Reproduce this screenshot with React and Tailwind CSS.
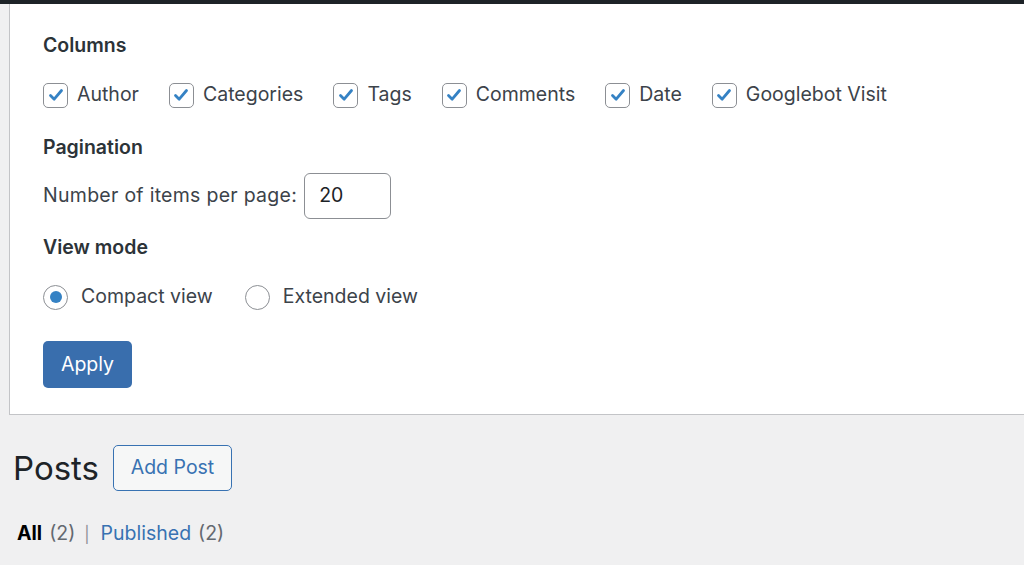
import React from "react";

const columns = ["Author", "Categories", "Tags", "Comments", "Date", "Googlebot Visit"];

const Checkbox = ({ label }) => (
  <label className="flex items-center gap-[9px]">
    <span className="w-[25px] h-[25px] rounded-[5px] border-[1.5px] border-[#8c8f94] bg-white flex items-center justify-center">
      <svg viewBox="0 0 20 20" className="w-[20px] h-[20px]">
        <path d="M4.5 10.5 L8.2 14.2 L15.5 5.5" fill="none" stroke="#3582c4" strokeWidth="2.8" strokeLinecap="round" strokeLinejoin="round" />
      </svg>
    </span>
    <span>{label}</span>
  </label>
);

const Radio = ({ label, checked }) => (
  <label className="flex items-center gap-[13px]">
    <span className="w-[25px] h-[25px] rounded-full border-[1.5px] border-[#8c8f94] bg-white flex items-center justify-center">
      {checked && <span className="w-[12px] h-[12px] rounded-full bg-[#3582c4]" />}
    </span>
    <span>{label}</span>
  </label>
);

export default function App() {
  return (
    <div
      className="w-[1024px] h-[565px] bg-[#f0f0f1] overflow-hidden text-[#3c434a] text-[19.5px]"
      style={{ fontFamily: 'Inter, "Liberation Sans", Arial, sans-serif' }}
    >
      <div className="h-[4px] bg-[#1d2327]" />

      {/* screen options panel */}
      <div className="ml-[9px] bg-white border-l-[1.5px] border-b-[1.5px] border-[#c3c4c7] pl-[33px] pt-[29px] pb-[26px]">
        <h2 className="font-semibold leading-[24px] text-[#2c3338]">Columns</h2>
        <div className="mt-[26px] h-[24px] flex items-center gap-[30px]">
          {columns.map((c) => (
            <Checkbox key={c} label={c} />
          ))}
        </div>

        <h2 className="mt-[28px] font-semibold leading-[24px] text-[#2c3338]">Pagination</h2>
        <div className="mt-[14px] flex items-center gap-[7px]">
          <span className="tracking-[0.28px]">Number of items per page:</span>
          <div className="w-[87px] h-[46px] rounded-[6px] border-[1.5px] border-[#8c8f94] flex items-center pl-[14px] text-[#1d2327]">
            20
          </div>
        </div>

        <h2 className="mt-[16px] font-semibold leading-[24px] text-[#2c3338]">View mode</h2>
        <div className="mt-[26px] h-[24px] flex items-center gap-[32px]">
          <Radio label="Compact view" checked />
          <Radio label="Extended view" />
        </div>

        <button className="mt-[32px] w-[89px] h-[47px] rounded-[5px] bg-[#396ead] text-white">
          Apply
        </button>
      </div>

      {/* page heading */}
      <div className="mt-[30px] pl-[13px] flex items-center gap-[14px]">
        <h1 className="text-[33px] leading-[45px] text-[#1d2327]">Posts</h1>
        <button className="w-[119px] h-[46px] rounded-[5px] border-[1.5px] border-[#3872b2] bg-[#f6f7f7] text-[#3872b2]">
          Add Post
        </button>
      </div>

      <div className="mt-[28px] pl-[17px] flex items-center gap-[7px]">
        <span className="font-bold text-black">All</span>
        <span className="text-[#646970]">(2)</span>
        <span className="text-[#8c8f94] text-[16px] ml-[2px] mr-[4px]">|</span>
        <span className="text-[#3872b2]">Published</span>
        <span className="text-[#646970]">(2)</span>
      </div>
    </div>
  );
}
